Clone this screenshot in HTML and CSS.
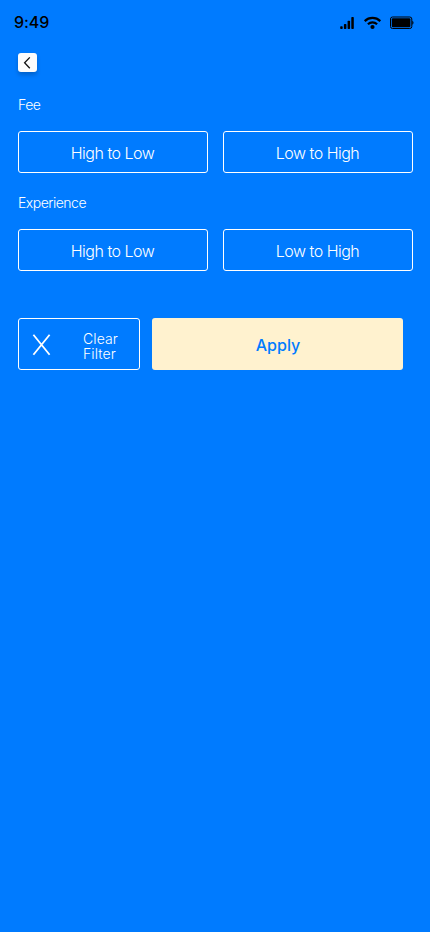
FILE: index.html
```html
<!DOCTYPE html>
<html lang="en">
<head>
<meta charset="utf-8">
<title>Filter</title>
<link rel="stylesheet" href="styles.css">
</head>
<body>
<header class="status">
  <span class="time">9:49</span>
  <svg class="indicators" width="74" height="14" viewBox="0 0 74 14" aria-hidden="true">
    <g fill="#000">
      <rect x="0.2" y="10.2" width="2.5" height="2.8" rx=".7"/>
      <rect x="3.9" y="8" width="2.5" height="5" rx=".7"/>
      <rect x="7.6" y="4.7" width="2.5" height="8.3" rx=".7"/>
      <rect x="11.3" y="1" width="2.5" height="12" rx=".7"/>
      <circle cx="32.5" cy="11" r="2.1"/>
      <rect x="51.8" y="2.3" width="18.6" height="8.9" rx="1"/>
      <path d="M72.3 4.7q1.2.5 1.2 2t-1.2 2z"/>
    </g>
    <g fill="none" stroke="#000">
      <path d="M24.7 5.1a11.2 11.2 0 0 1 15.6 0M27.9 8.3a6.7 6.7 0 0 1 9.2 0" stroke-width="2.2"/>
      <rect x="50.5" y="1" width="21.3" height="11.5" rx="2"/>
    </g>
  </svg>
</header>
<main class="filters">
  <button class="back" aria-label="Back">
    <svg width="19" height="19" viewBox="0 0 19 19"><path d="M11.8 4.4 6.6 9.8l5.2 5.4" fill="none" stroke="#111" stroke-width="1.3"/></svg>
  </button>
  <section class="group">
    <h2 class="label">Fee</h2>
    <div class="options">
      <button class="option">High to Low</button>
      <button class="option">Low to High</button>
    </div>
  </section>
  <section class="group">
    <h2 class="label">Experience</h2>
    <div class="options">
      <button class="option">High to Low</button>
      <button class="option">Low to High</button>
    </div>
  </section>
  <div class="actions">
    <button class="clear">
      <svg width="19" height="22" viewBox="0 0 19 22"><path d="M1.4 .8 17.6 20.8M17.6 .8 1.4 20.8" fill="none" stroke="#fff" stroke-width="1.8"/></svg>
      <span class="clear-text">Clear<br>Filter</span>
    </button>
    <button class="apply">Apply</button>
  </div>
</main>
</body>
</html>
```
FILE: styles.css
```css
* { box-sizing: border-box; }
body {
  margin: 0;
  min-height: 100vh;
  background: #007bff;
  color: #fff;
  font-family: Inter, sans-serif;
}
button {
  margin: 0;
  padding: 0;
  border: 0;
  font-family: inherit;
  color: inherit;
  background: none;
}
svg { display: block; }
.status {
  height: 53px;
  padding: 13px 16px 0 14px;
  display: flex;
  justify-content: space-between;
  align-items: flex-start;
}
.time {
  color: #000;
  font-size: 16px;
  line-height: 19px;
  font-weight: 500;
  letter-spacing: -.1px;
}
.indicators { margin-top: 3px; }
.filters { padding: 0 17px 0 18px; }
.back {
  display: block;
  width: 19px;
  height: 19px;
  border-radius: 3px;
  background: #fcfcfc;
  box-shadow: 0 3px 4px rgba(0, 0, 0, .2);
}
.group { padding-top: 24px; }
.group + .group { padding-top: 21px; }
.label {
  margin: 0;
  height: 18px;
  font-size: 14px;
  line-height: 18px;
  font-weight: 300;
  letter-spacing: -.5px;
}
.options {
  display: grid;
  grid-template-columns: 190px 190px;
  gap: 15px;
  margin-top: 17px;
}
.option {
  height: 42px;
  padding: 1px 1px 0 0;
  border: 1px solid #fff;
  border-radius: 3px;
  font-size: 16px;
  line-height: 20px;
  font-weight: 300;
  letter-spacing: -.5px;
}
.actions {
  display: flex;
  gap: 12px;
  margin-top: 47px;
}
.clear {
  display: flex;
  align-items: center;
  width: 122px;
  height: 52px;
  padding: 2px 0 0 13px;
  border: 1px solid #fff;
  border-radius: 3px;
}
.clear-text {
  margin: 2px 0 0 32px;
  font-size: 14px;
  line-height: 15px;
  font-weight: 300;
  letter-spacing: .1px;
  text-align: left;
}
.apply {
  width: 251px;
  height: 52px;
  padding: 1px 0 0 1px;
  border-radius: 3px;
  background: #fff2cf;
  color: #007bff;
  font-size: 16px;
  font-weight: 500;
  letter-spacing: 0;
}
```
